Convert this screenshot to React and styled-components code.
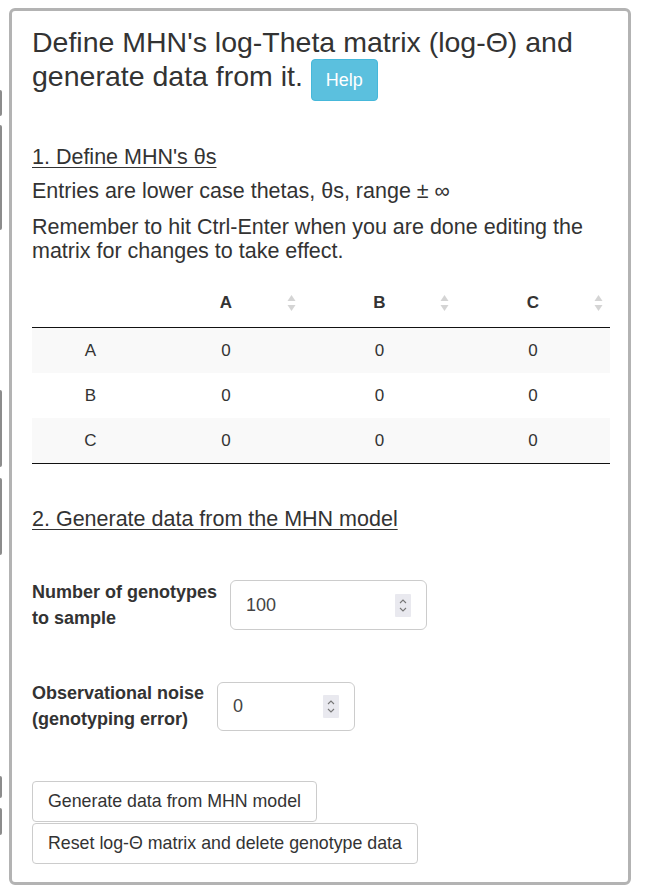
import React from 'react'
import styled, { createGlobalStyle } from "styled-components";

const GlobalStyle = createGlobalStyle`
	body {
		margin: 0;
		background: #fff;
		color: #333;
		font-family: "Liberation Sans", Arial, Helvetica, sans-serif;
	}
`;

const Page = styled.div`
	display: flex;
	align-items: flex-start;
	gap: 7px;
`;

// clipped edges of the neighbouring column
const Gutter = styled.div`
	width: 2px;
	display: flex;
	flex-direction: column;
`;

const Edge = styled.div`
	width: 2px;
	height: ${(p) => p.$h}px;
	margin-top: ${(p) => p.$top}px;
	background: #8c8c8c;
	border-radius: 0 2px 2px 0;
`;

const Panel = styled.div`
	width: 622px;
	box-sizing: border-box;
	margin-top: 8px;
	border: 3px solid #b3b3b3;
	border-radius: 6px;
	padding: 0 18px 18px 20px;
	background: #fff;
`;

const Title = styled.h3`
	margin: 14px 0 0;
	font-size: 28.5px;
	font-weight: normal;
	line-height: 34px;
	color: #333;
`;

const HelpButton = styled.button`
	display: inline-block;
	padding: 8px 14px;
	font-family: inherit;
	font-size: 18px;
	line-height: 24px;
	color: #fff;
	background: #5bc0de;
	border: 1px solid #46b8da;
	border-radius: 4px;
	cursor: pointer;
`;

const Section = styled.div`
	margin-top: ${(p) => p.$top}px;
	font-size: 21.5px;
	line-height: 26px;
	text-decoration: underline;
	text-underline-offset: 3px;
	text-decoration-thickness: 1px;
`;

const Para = styled.p`
	margin: ${(p) => p.$top}px 0 0;
	font-size: 21.5px;
	line-height: 24px;
`;

const Table = styled.table`
	width: 578px;
	margin-top: 16px;
	table-layout: fixed;
	border-collapse: collapse;
	border-bottom: 1px solid #111;
	font-size: 17px;
`;

const Th = styled.th`
	padding: 11px 7px;
	line-height: 26px;
	font-weight: bold;
	border-bottom: 1px solid #111;
`;

const HeadCell = styled.div`
	display: grid;
	grid-template-columns: 16px 1fr 16px;
	align-items: center;
	justify-items: center;
`;

const SortIcon = styled.svg`
	justify-self: end;
	width: 9px;
	height: 18px;
`;

const Row = styled.tr`
	background: ${(p) => (p.$odd ? "#f9f9f9" : "#fff")};
	& + & td {
		border-top: 1px solid #ddd;
	}
`;

const Td = styled.td`
	padding: 10px;
	line-height: 25px;
	text-align: center;
`;

const Group = styled.div`
	display: flex;
	align-items: center;
	gap: 13px;
	margin-top: ${(p) => p.$top}px;
`;

const Label = styled.label`
	font-size: 18px;
	font-weight: bold;
	line-height: 26px;
	white-space: nowrap;
`;

const NumberBox = styled.div`
	display: flex;
	align-items: center;
	box-sizing: border-box;
	width: ${(p) => p.$w}px;
	height: ${(p) => p.$h}px;
	padding: 0 15px;
	border: 1px solid #ccc;
	border-radius: 6px;
	background: #fff;
`;

const NumberInput = styled.input`
	flex: 1;
	min-width: 0;
	border: none;
	outline: none;
	padding: 0;
	background: transparent;
	font-family: inherit;
	font-size: 18px;
	color: #444;
`;

const Spinner = styled.svg`
	width: 16px;
	height: 23px;
	flex: none;
`;

const Buttons = styled.div`
	display: flex;
	flex-direction: column;
	align-items: flex-start;
	gap: 1px;
	margin-top: 49px;
`;

const Button = styled.button`
	padding: 8px 15px;
	font-family: inherit;
	font-size: 17.8px;
	line-height: 23px;
	color: #333;
	background: #fff;
	border: 1px solid #ccc;
	border-radius: 4px;
	cursor: pointer;
`;

const Sort = () => (
	<SortIcon viewBox="0 0 9 18">
		<path d="M4.5 1 L8.5 7 L0.5 7 Z" fill="#d4d4d4" />
		<path d="M0.5 11 L8.5 11 L4.5 17 Z" fill="#d4d4d4" />
	</SortIcon>
);

const Spin = () => (
	<Spinner viewBox="0 0 16 23">
		<rect width="16" height="23" rx="1" fill="#e9e9ef" />
		<path d="M5 9 L8 6 L11 9" fill="none" stroke="#777" strokeWidth="1.1" />
		<path d="M5 14 L8 17 L11 14" fill="none" stroke="#777" strokeWidth="1.1" />
	</Spinner>
);

const edges = [
	{ top: 90, h: 26 },
	{ top: 9, h: 105 },
	{ top: 160, h: 77 },
	{ top: 11, h: 77 },
	{ top: 221, h: 22 },
	{ top: 10, h: 27 },
];

const cols = ["A", "B", "C"];

const App = () => {
	return (
		<>
			<GlobalStyle />
			<Page>
				<Gutter>
					{edges.map((e, i) => (
						<Edge key={i} $top={e.top} $h={e.h} />
					))}
				</Gutter>
				<Panel>
					<Title>
						Define MHN's log-Theta matrix (log-Θ) and generate data from it.{" "}
						<HelpButton>Help</HelpButton>
					</Title>
					<Section $top={43}>1. Define MHN's θs</Section>
					<Para $top={9}>Entries are lower case thetas, θs, range ± ∞</Para>
					<Para $top={12}>
						Remember to hit Ctrl-Enter when you are done editing the matrix for
						changes to take effect.
					</Para>
					<Table>
						<colgroup>
							<col style={{ width: 117 }} />
							<col style={{ width: 154 }} />
							<col style={{ width: 153 }} />
							<col style={{ width: 154 }} />
						</colgroup>
						<thead>
							<tr>
								<Th />
								{cols.map((c) => (
									<Th key={c}>
										<HeadCell>
											<span />
											<span>{c}</span>
											<Sort />
										</HeadCell>
									</Th>
								))}
							</tr>
						</thead>
						<tbody>
							{cols.map((r, i) => (
								<Row key={r} $odd={i % 2 === 0}>
									<Td>{r}</Td>
									<Td>0</Td>
									<Td>0</Td>
									<Td>0</Td>
								</Row>
							))}
						</tbody>
					</Table>
					<Section $top={42}>2. Generate data from the MHN model</Section>
					<Group $top={47}>
						<Label>
							Number of genotypes
							<br />
							to sample
						</Label>
						<NumberBox $w={197} $h={50}>
							<NumberInput defaultValue="100" />
							<Spin />
						</NumberBox>
					</Group>
					<Group $top={49}>
						<Label>
							Observational noise
							<br />
							(genotyping error)
						</Label>
						<NumberBox $w={138} $h={49}>
							<NumberInput defaultValue="0" />
							<Spin />
						</NumberBox>
					</Group>
					<Buttons>
						<Button>Generate data from MHN model</Button>
						<Button>Reset log-Θ matrix and delete genotype data</Button>
					</Buttons>
				</Panel>
			</Page>
		</>
	);
}

export default App
